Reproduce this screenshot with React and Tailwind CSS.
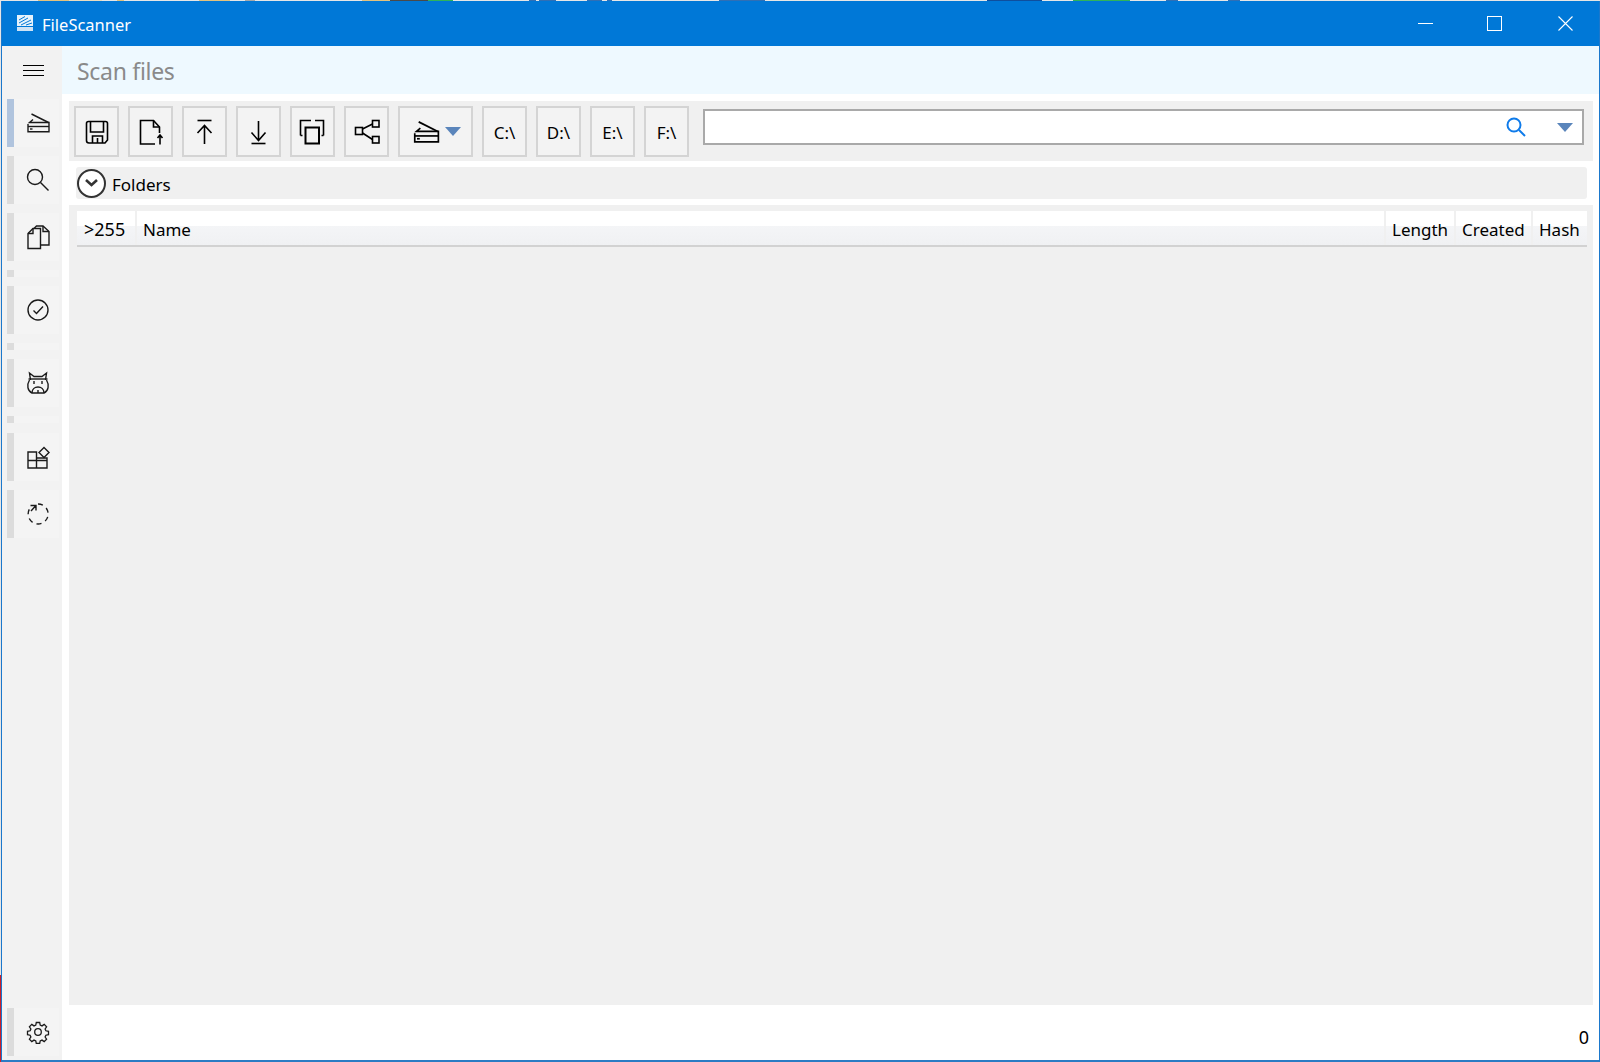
const font = { fontFamily: '"Noto Sans", sans-serif', fontVariantLigatures: "none" };

function Ico({ children, size = 32, vb = 32, width = 1.6, className = "" }) {
  return (
    <svg width={size} height={size} viewBox={`0 0 ${vb} ${vb}`} fill="none" stroke="currentColor" strokeWidth={width} className={className}>
      {children}
    </svg>
  );
}

const ScannerShape = () => (
  <>
    <path d="M9.5 7 L26.5 15.5" />
    <path d="M11 12.5 L7.5 15.5 H27 V24.7 H6 V17" />
    <path d="M6 19.5 H27" />
    <path d="M8 22 H10.5" />
  </>
);

const saveIcon = (
  <>
    <path d="M7.5 5.5 H24.5 Q26.5 5.5 26.5 7.5 V24 L24 27 H8 Q5.5 27 5.5 24.5 V7.5 Q5.5 5.5 7.5 5.5 Z" />
    <path d="M9.5 5.5 V16 H22.5 V5.5" />
    <path d="M11.5 27 V20 H21.5 V27" />
    <path d="M16.5 22 V27" />
  </>
);
const exportIcon = (
  <>
    <path d="M20 28 H5.5 V4.5 H18.5 L24.5 11 V17" />
    <path d="M18.5 4.5 V11 H24.5" />
    <path d="M25 28.5 V19 M22.5 22 L25 19 L27.5 22" />
  </>
);
const topIcon = (
  <>
    <path d="M8.5 4.5 H22.5" />
    <path d="M15.5 28 V9.5 M8.5 17 L15.5 9.5 L22.5 17" />
  </>
);
const bottomIcon = (
  <>
    <path d="M8.5 27.5 H22.5" />
    <path d="M15.5 5 V24.5 M8.5 16.5 L15.5 24.5 L22.5 16.5" />
  </>
);
const copyIcon = (
  <>
    <path d="M3.5 19.5 V4.5 H14 M18 4.5 H26.5 V19.5" />
    <path d="M3.5 19.5 H5.5 M24.5 19.5 H26.5" />
    <path d="M8.5 11.5 H22 V27.5 H8.5 Z" strokeWidth="2" />
  </>
);
const shareIcon = (
  <>
    <rect x="4.5" y="11.5" width="7" height="7" />
    <rect x="21.5" y="4.5" width="6.5" height="6.5" />
    <rect x="21.5" y="20.5" width="6.5" height="6.5" />
    <path d="M11.5 13 L21.5 8 M11.5 17 L21.5 23.5" />
  </>
);

const sideItems = [
  { h: "h-[48px]", mt: "mt-[6px]", bar: "bg-[#b0c4de]", icon: <ScannerShape /> },
  { h: "h-[48px]", mt: "mt-[9px]", icon: <><circle cx="13" cy="13" r="7.5" /><path d="M18.5 18.5 L26.5 26.5" /></> },
  { h: "h-[48px]", mt: "mt-[9px]", icon: <><path d="M6 12.5 L11 7.5 H18.5 V27.5 H6 Z" /><path d="M11 7.5 V12.5 H6" /><path d="M12 7.5 L14.5 5 H21 L27 10.5 V24 H18.5" /><path d="M21 5 V10.5 H27" /></> },
  { h: "h-[7px]", mt: "mt-[9px]" },
  { h: "h-[48px]", mt: "mt-[9px]", icon: <><circle cx="16" cy="16" r="10" /><path d="M11.5 16.5 L14.5 19.5 L21 12.5" /></> },
  { h: "h-[7px]", mt: "mt-[9px]" },
  { h: "h-[48px]", mt: "mt-[9px]", icon: <><path d="M8.5 13 L7.5 6 L12 9.5 H20 L24.5 6 L23.5 13" /><path d="M6.5 12 H25.5" /><path d="M7.5 13 C4.5 18 5.5 24 10 26 H22 C26.5 24 27.5 18 24.5 13" /><path d="M12 14 V17 M20 14 V17" /><path d="M10 26 C10 22 13 20 16 20 C19 20 22 22 22 26 M16 23 V26" /></> },
  { h: "h-[7px]", mt: "mt-[9px]" },
  { h: "h-[48px]", mt: "mt-[10px]", icon: <><path d="M6 11 H14.5 V27 H6 Z M14.5 17 H25 V27 H14.5 Z M6 19.5 H25" /><path d="M22 6.5 L27 11.5 L22 16.5 L17 11.5 Z" /></> },
  { h: "h-[48px]", mt: "mt-[9px]", icon: <><path d="M16 6 A10 10 0 1 1 9 9" strokeDasharray="5 4.3" /><path d="M9 13 L13.5 8 M8.5 7.5 H14 V12.5" /></> },
];

const toolButtons = [saveIcon, exportIcon, topIcon, bottomIcon, copyIcon, shareIcon];

// bits of the desktop showing along the top edge
const topStrip = [
  "w-[38px] bg-[#e6e6e6]", "w-[31px] bg-[#e2c27e]", "w-[33px] bg-[#e9dcc0]", "w-[15px] bg-[#e6e6e6]",
  "w-[7px] bg-[#e2c27e]", "w-[75px] bg-[#e6e6e6]", "w-[31px] bg-[#e2c27e]", "w-[15px] bg-[#e6e6e6]",
  "w-[10px] bg-[#a8a8a8]", "w-[107px] bg-[#e6e6e6]", "w-[28px] bg-[#e2c27e]", "w-[38px] bg-[#4a4a4a]",
  "w-[25px] bg-[#2fb35a]", "w-[76px] bg-[#e6e6e6]", "w-[7px] bg-[#2f6fb5]", "w-[3px] bg-[#e6e6e6]",
  "w-[17px] bg-[#2f6fb5]", "w-[31px] bg-[#e6e6e6]", "w-[15px] bg-[#2f6fb5]", "w-[5px] bg-[#e6e6e6]",
  "w-[5px] bg-[#2f6fb5]", "w-[107px] bg-[#e6e6e6]", "w-[46px] bg-[#2f6fb5]", "w-[222px] bg-[#e6e6e6]",
  "w-[55px] bg-[#0f4f9e]", "w-[31px] bg-[#e6e6e6]", "w-[57px] bg-[#2fb35a]", "w-[36px] bg-[#e6e6e6]",
  "w-[12px] bg-[#2f6fb5]", "w-[50px] bg-[#e6e6e6]", "w-[12px] bg-[#2f6fb5]", "flex-1 bg-[#e6e6e6]",
];

function ToolButton({ className = "w-[45px]", children }) {
  return (
    <div className={`${className} h-[51px] shrink-0 border-2 border-[#d4d4d4] bg-[#f3f3f3] flex items-center justify-center text-black`}>
      {children}
    </div>
  );
}

function Arrow({ className = "" }) {
  return <div className={`w-0 h-0 border-l-[8px] border-r-[8px] border-t-[9px] border-l-transparent border-r-transparent border-t-[#5a85bb] ${className}`} />;
}

function HeaderCell({ className, children }) {
  return (
    <div className={`${className} shrink-0 h-[34px] flex items-center pl-[6px] pt-[3px] text-[17px] text-black bg-[linear-gradient(#ffffff_0%,#ffffff_43%,#f4f5f7_43%,#f0f1f3_100%)]`}>
      {children}
    </div>
  );
}

export default function App() {
  return (
    <div style={font} className="w-[1600px] h-[1062px] overflow-hidden flex flex-col bg-white">
      <div className="h-[1px] shrink-0 flex">
        {topStrip.map((c, i) => (
          <div key={i} className={c} />
        ))}
      </div>

      <div className="flex-1 flex min-h-0">
        {/* desktop sliver on the far left */}
        <div className="w-[1px] shrink-0 flex flex-col">
          <div className="h-[974px] bg-[#e6e6e6]" />
          <div className="flex-1 bg-[#c8202c]" />
        </div>

        <div className="flex-1 min-w-0 flex flex-col border-l border-r border-b-2 border-l-[#1b78cc] border-r-[#1b78cc] border-b-[#2b7cc4]">
          {/* title bar */}
          <div className="h-[45px] shrink-0 bg-[#0078d7] flex items-center text-white">
            <svg width="16" height="16" viewBox="0 0 16 16" className="ml-[15px] -mt-[1px]">
              <path d="M0 0 H16 V11 H0 Z" fill="#ffffff" opacity="0.9" />
              <path d="M2 5 L8 1.5 M2 8 L11 3 M4 10 L14 5 M9 10 L15 8" stroke="#0078d7" strokeWidth="1" />
              <path d="M0 12 H16 V16 H0 Z" fill="#cfe3f5" />
            </svg>
            <span className="ml-[9px] pt-[3px] text-[16.5px] leading-none">FileScanner</span>
            <div className="ml-auto flex items-center">
              <div className="w-[15px] h-[1px] bg-white mr-[54px]" />
              <div className="w-[15px] h-[15px] border border-white mr-[56px]" />
              <svg width="15" height="15" viewBox="0 0 15 15" stroke="#fff" strokeWidth="1.1" className="mr-[26px]">
                <path d="M0.5 0.5 L14.5 14.5 M14.5 0.5 L0.5 14.5" />
              </svg>
            </div>
          </div>

          <div className="flex-1 flex min-h-0">
            {/* sidebar */}
            <div className="w-[60px] shrink-0 bg-[#f2f2f2] flex flex-col pl-[5px] text-[#1a1a1a]">
              <div className="h-[47px] shrink-0 flex items-center pl-[16px] pt-[2px] text-black">
                <svg width="21" height="11" viewBox="0 0 21 11" stroke="#000" strokeWidth="1">
                  <path d="M0 0.5 H21 M0 5.5 H21 M0 10.5 H21" />
                </svg>
              </div>
              {sideItems.map((item, i) => (
                <div key={i} className={`${item.h} ${item.mt} shrink-0 w-[52px] bg-[#f4f4f4] flex`}>
                  <div className={`w-[7px] ${item.bar || "bg-[#dcdcdc]"}`} />
                  {item.icon && (
                    <div className="flex-1 flex items-center justify-center pl-[2px]">
                      <Ico width={1.4}>{item.icon}</Ico>
                    </div>
                  )}
                </div>
              ))}
              <div className="flex-1" />
              <div className="h-[48px] shrink-0 w-[52px] mb-[4px] bg-[#f4f4f4] flex">
                <div className="w-[7px] bg-[#dcdcdc]" />
                <div className="flex-1 flex items-center justify-center pl-[2px]">
                  <Ico size={24} vb={24} width={1.3}>
                    <path d="M10.3 2.5 h3.4 l.5 2.6 1.8.8 2.2-1.5 2.4 2.4-1.5 2.2.8 1.8 2.6.5 v3.4 l-2.6.5 -.8 1.8 1.5 2.2 -2.4 2.4 -2.2-1.5 -1.8.8 -.5 2.6 h-3.4 l-.5-2.6 -1.8-.8 -2.2 1.5 -2.4-2.4 1.5-2.2 -.8-1.8 -2.6-.5 v-3.4 l2.6-.5 .8-1.8 -1.5-2.2 2.4-2.4 2.2 1.5 1.8-.8 z" />
                    <circle cx="12" cy="12" r="3.3" />
                  </Ico>
                </div>
              </div>
            </div>

            {/* main */}
            <div className="flex-1 min-w-0 flex flex-col">
              <div className="h-[48px] shrink-0 bg-[#eef9ff] flex items-center pl-[15px] pt-[3px] text-[23px] tracking-[-0.3px] text-[#8a8a8a]">
                Scan files
              </div>

              <div className="mt-[7px] ml-[7px] mr-[6px] h-[60px] shrink-0 bg-[#f0f0f0] flex items-start pt-[5px] pl-[5px] pr-[9px]">
                <div className="flex gap-[9px]">
                  {toolButtons.map((icon, i) => (
                    <ToolButton key={i}><Ico>{icon}</Ico></ToolButton>
                  ))}
                  <ToolButton className="w-[75px] !justify-start pl-[8px]">
                    <Ico size={36} width={1.5}><ScannerShape /></Ico>
                    <Arrow className="ml-[1px]" />
                  </ToolButton>
                  {["C:\\", "D:\\", "E:\\", "F:\\"].map((d) => (
                    <ToolButton key={d}><span className="text-[17px] pt-[2px]">{d}</span></ToolButton>
                  ))}
                </div>
                <div className="ml-[14px] mt-[3px] flex-1 h-[36px] border-2 border-[#a9a9a9] bg-white flex items-center justify-end">
                  <svg width="20" height="20" viewBox="0 0 20 20" fill="none" stroke="#0f7bea" strokeWidth="2" className="mr-[31px]">
                    <circle cx="8" cy="8" r="6.5" />
                    <path d="M13 13 L19 19" />
                  </svg>
                  <Arrow className="mr-[9px]" />
                </div>
              </div>

              <div className="mt-[6px] ml-[14px] mr-[12px] h-[32px] shrink-0 rounded-[3px] bg-[#f0f0f0] flex items-center text-[17px] text-black">
                <div className="w-[29px] h-[29px] rounded-full border-2 border-[#333] bg-white flex items-center justify-center ml-[1px]">
                  <svg width="13" height="8" viewBox="0 0 13 8" fill="none" stroke="#333" strokeWidth="2.6">
                    <path d="M1 1 L6.5 6 L12 1" />
                  </svg>
                </div>
                <span className="ml-[6px] pt-[4px]">Folders</span>
              </div>

              <div className="mt-[6px] ml-[7px] mr-[6px] h-[800px] shrink-0 bg-[#f0f0f0] pt-[6px] pl-[8px] pr-[6px]">
                <div className="flex border-b-2 border-[#d2d2d2] gap-[2px] h-[36px]">
                  <HeaderCell className="w-[58px]"><span className="text-[18px] pl-[1px]">&gt;255</span></HeaderCell>
                  <HeaderCell className="flex-1 min-w-0">Name</HeaderCell>
                  <HeaderCell className="w-[68px]">Length</HeaderCell>
                  <HeaderCell className="w-[75px]">Created</HeaderCell>
                  <HeaderCell className="w-[54px]">Hash</HeaderCell>
                </div>
              </div>

              <div className="flex-1 flex justify-end items-center pr-[10px] pt-[10px] text-[18px] text-black">0</div>
            </div>
          </div>
        </div>
      </div>
    </div>
  );
}
